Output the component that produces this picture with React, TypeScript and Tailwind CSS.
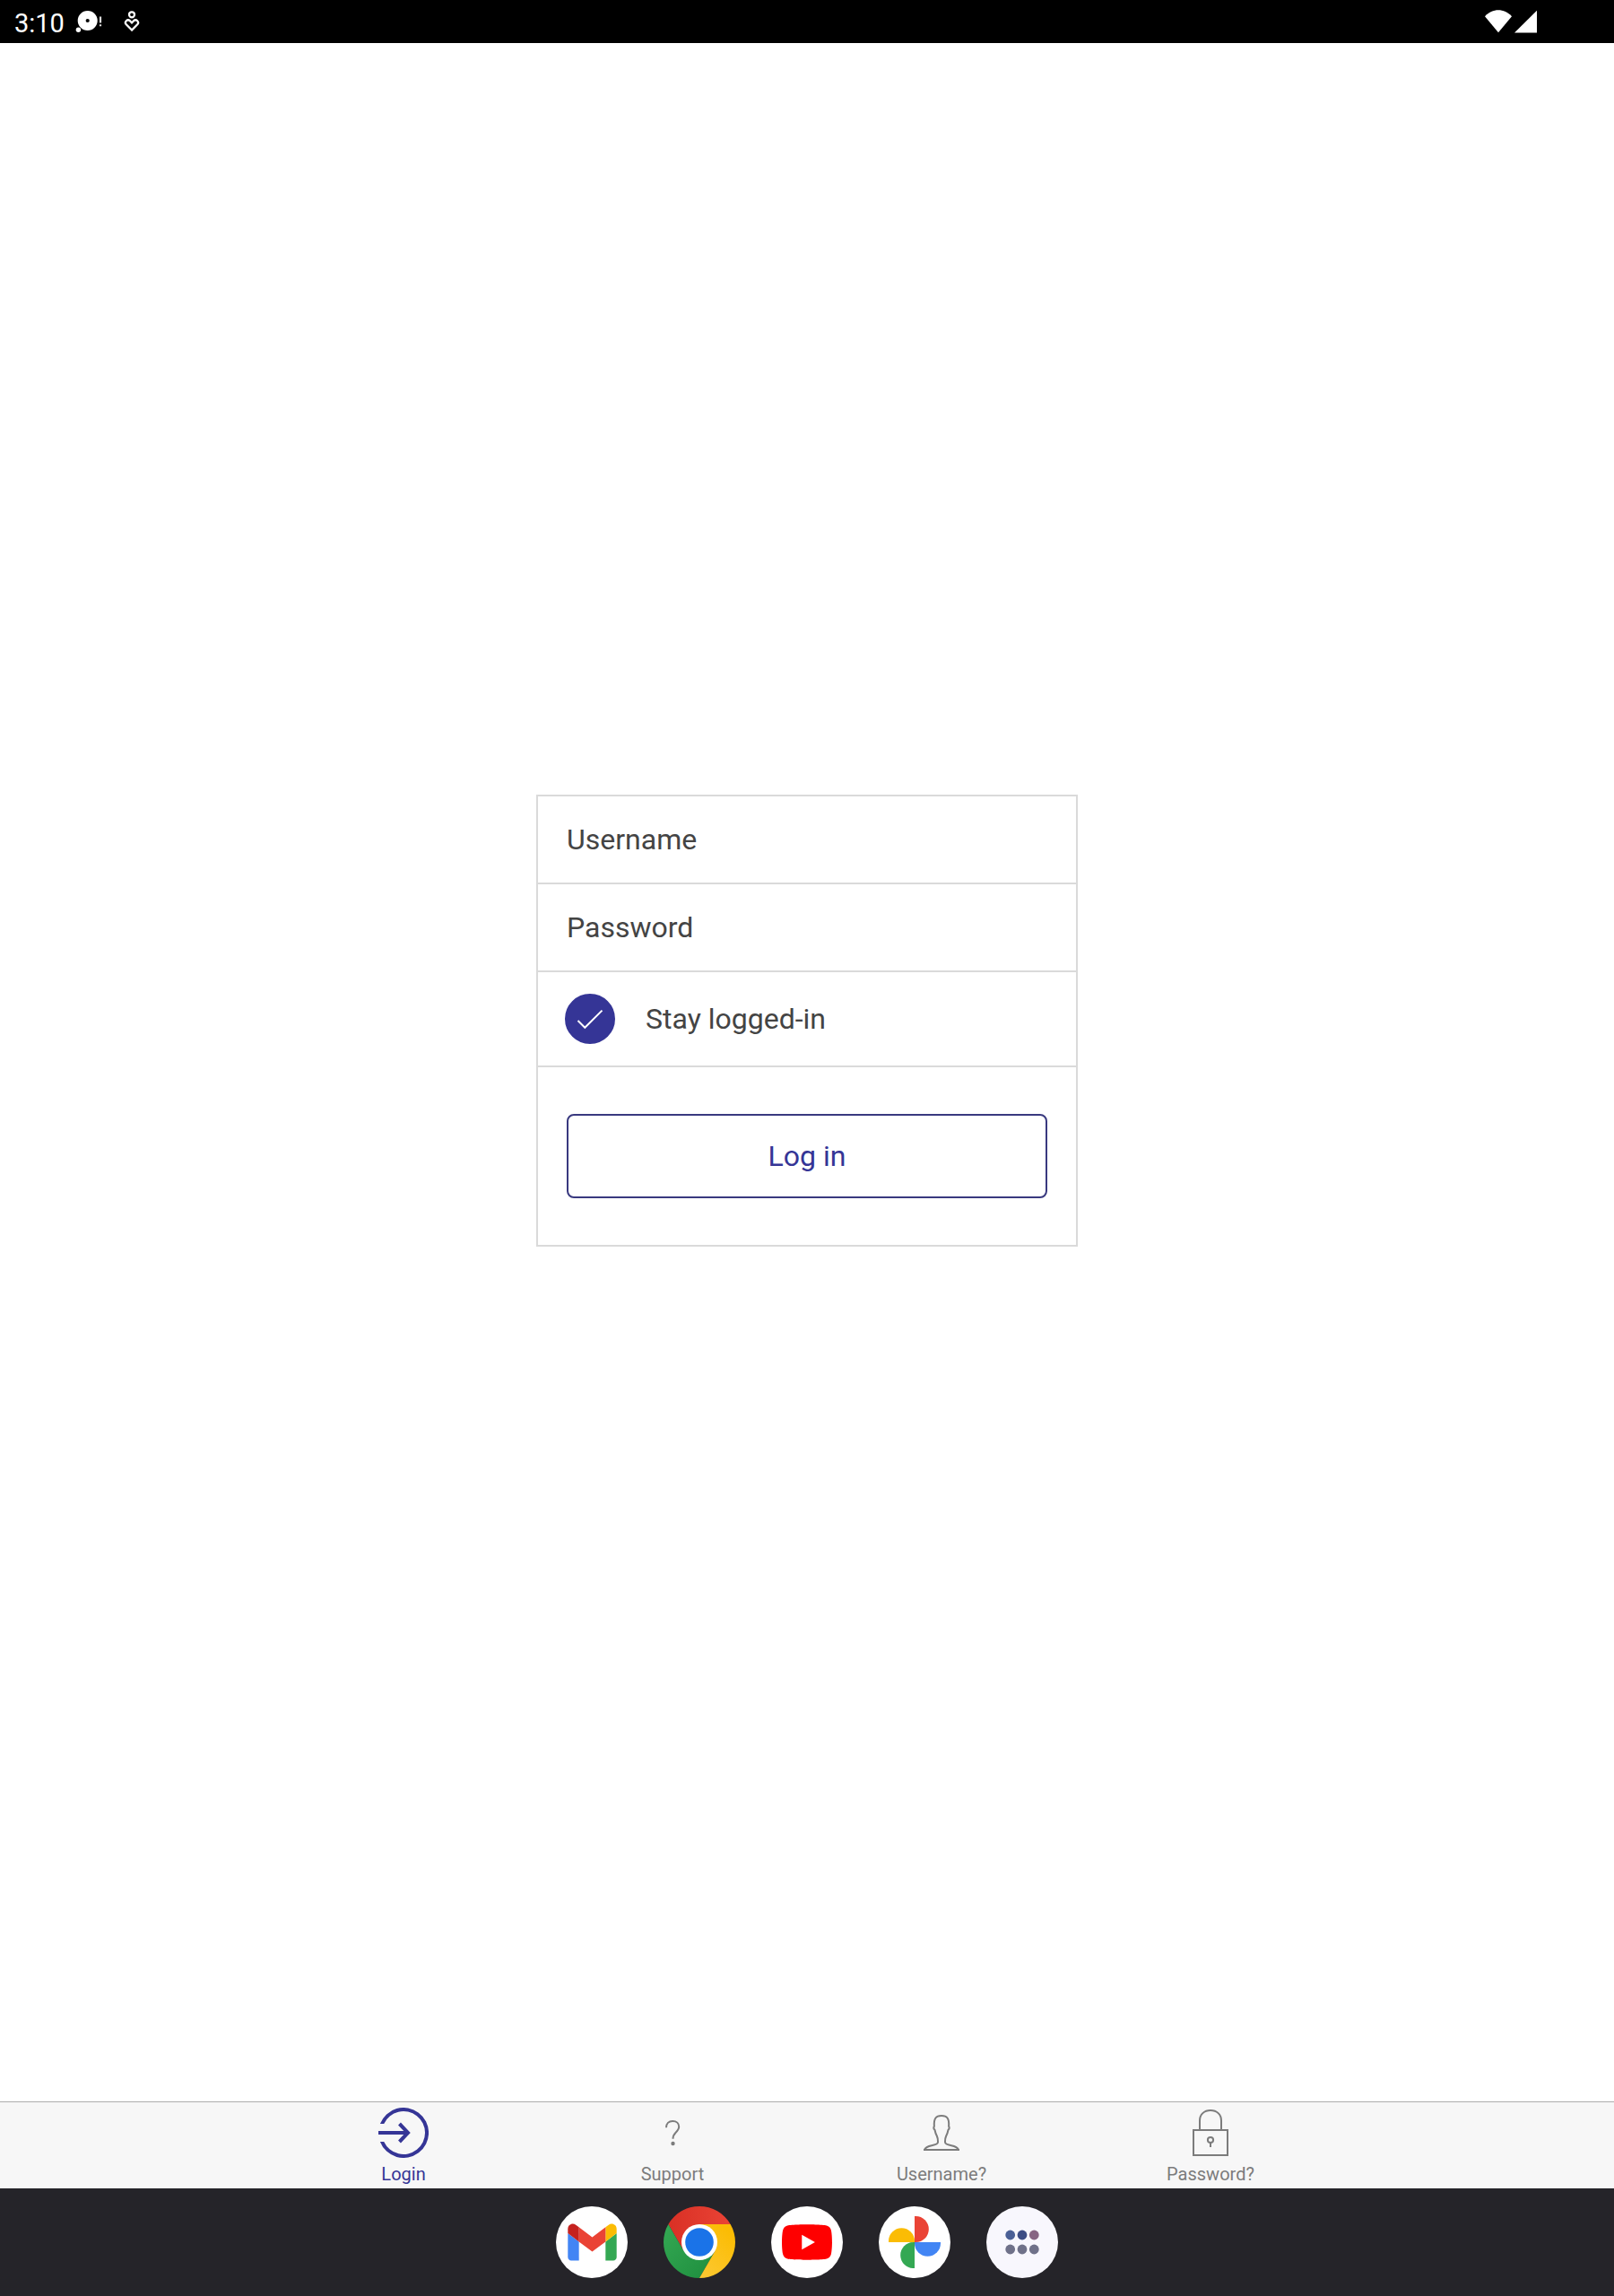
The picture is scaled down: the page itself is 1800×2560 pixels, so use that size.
import React, { useState } from 'react';
import clsx from 'clsx';

type TabId = 'login' | 'support' | 'username' | 'password';

const StatusBar = () => (
  <header className="flex h-12 shrink-0 items-center justify-between bg-black pl-4 pr-[86px] text-white">
    <div className="flex items-center">
      <span className="pt-1 text-[29px] leading-8">3:10</span>
      <svg className="ml-3 h-12 w-[30px]" viewBox="84 0 30 48" fill="currentColor" aria-hidden="true">
        <path fillRule="evenodd" d="M97.7 12a11 11 0 1 1 0 22a11 11 0 1 1 0-22zM97.7 20.9a2.1 2.1 0 1 0 0 4.2a2.1 2.1 0 1 0 0-4.2z" />
        <circle cx="87.4" cy="33.3" r="2.7" />
        <path d="M110.9 18.5h2.2v7h-2.2zM110.9 27.3h2.2v2h-2.2z" opacity="0.85" />
      </svg>
      <svg className="ml-6 h-12 w-[18px]" viewBox="138 0 18 48" fill="none" stroke="currentColor" strokeWidth="2.3" aria-hidden="true">
        <circle cx="147" cy="16.3" r="3" />
        <path d="M147 33.5l-6.2-6.2a2.9 2.9 0 0 1 4.1-4.1l2.1 2.2l2.1-2.2a2.9 2.9 0 0 1 4.1 4.1z" />
      </svg>
    </div>
    <div className="flex items-center gap-[3px]">
      <svg className="h-12 w-[30px]" viewBox="0 0 30 48" fill="currentColor" aria-hidden="true">
        <path d="M15 36.3L0 18.3C8.5 9 21.5 9 30 18.3z" />
      </svg>
      <svg className="h-12 w-[25px]" viewBox="0 0 25 48" fill="currentColor" aria-hidden="true">
        <path d="M0 36.6L25 11.7V36.6z" />
      </svg>
    </div>
  </header>
);

const LoginIcon = () => (
  <svg className="size-14" viewBox="0 0 56 56" aria-hidden="true">
    <path fill="currentColor" d="M1.9 18A28 28 0 1 1 1.9 38H6.2A24 24 0 1 0 6.2 18z" />
    <path fill="none" stroke="currentColor" strokeWidth="4" d="M0 28H32M23.5 18L33 28L23.5 38" />
  </svg>
);

const HelpIcon = () => (
  <svg className="size-14" viewBox="0 0 56 56" aria-hidden="true">
    <path
      fill="none"
      stroke="currentColor"
      strokeWidth="2"
      d="M21 22.2C21 17.8 23.8 15 28.2 15C32.4 15 35.2 17.7 35.2 21.3C35.2 24.3 33.6 25.9 31.4 28C29.2 30.2 28.5 31.5 28.5 34.8"
    />
    <circle cx="28.5" cy="40" r="2.2" fill="currentColor" />
  </svg>
);

const PersonIcon = () => (
  <svg className="size-14" viewBox="0 0 56 56" aria-hidden="true">
    <path
      fill="none"
      stroke="currentColor"
      strokeWidth="2"
      strokeLinejoin="round"
      d="M9 47C10.3 43.8 13.5 42.9 17 42.2C21 41.4 24 40.6 24 38.5C24 36 24.2 34.5 22.8 31.5C21.5 29 20.9 27 20.5 24.8C19.3 24 19.2 22 19.9 20.5C19.3 12.5 21.5 9 28 9C34.5 9 36.7 12.5 36.1 20.5C36.8 22 36.7 24 35.5 24.8C35.1 27 34.5 29 33.2 31.5C31.8 34.5 32 36 32 38.5C32 40.6 35 41.4 39 42.2C42.5 42.9 45.7 43.8 47 47z"
    />
    <path fill="currentColor" d="M8 46H48V48H8z" />
  </svg>
);

const LockIcon = () => (
  <svg className="size-14" viewBox="0 0 56 56" fill="none" stroke="currentColor" strokeWidth="2" aria-hidden="true">
    <path d="M9 25H47V53H9z" />
    <path d="M16 25V14.5C16 7.5 21 3 28 3S40 7.500 40 14.500V25" />
    <circle cx="28" cy="36" r="3.1" />
    <path d="M28 39V44" />
  </svg>
);

const tabs: { id: TabId; label: string; icon: React.ReactNode }[] = [
  { id: 'login', label: 'Login', icon: <LoginIcon /> },
  { id: 'support', label: 'Support', icon: <HelpIcon /> },
  { id: 'username', label: 'Username?', icon: <PersonIcon /> },
  { id: 'password', label: 'Password?', icon: <LockIcon /> },
];

const GmailIcon = () => (
  <svg className="size-20" viewBox="0 0 80 80" aria-hidden="true">
    <circle cx="40" cy="40" r="40" fill="#fff" />
    <g transform="translate(13.3 19.6) scale(0.618) translate(-52 -42)">
      <path fill="#4285f4" d="M58 108h14V74L52 59v43c0 3.32 2.69 6 6 6" />
      <path fill="#34a853" d="M120 108h14c3.32 0 6-2.69 6-6V59l-20 15" />
      <path fill="#fbbc04" d="M120 48v26l20-15v-8c0-7.42-8.47-11.65-14.4-7.2" />
      <path fill="#ea4335" d="M72 74V48l24 18 24-18v26L96 92" />
      <path fill="#c5221f" d="M52 51v8l20 15V48l-5.6-4.2c-5.94-4.45-14.4-.22-14.4 7.2" />
    </g>
  </svg>
);

const ChromeIcon = () => (
  <svg className="size-20" viewBox="0 0 80 80" aria-hidden="true">
    <defs>
      <linearGradient id="chromeRed" x1="0" y1="0" x2="1" y2="0">
        <stop offset="0" stopColor="#d93025" />
        <stop offset="1" stopColor="#ea4335" />
      </linearGradient>
      <linearGradient id="chromeGreen" x1="1" y1="1" x2="0" y2="0">
        <stop offset="0" stopColor="#1e8e3e" />
        <stop offset="1" stopColor="#34a853" />
      </linearGradient>
      <linearGradient id="chromeYellow" x1="0" y1="1" x2="0.6" y2="0">
        <stop offset="0" stopColor="#fcc934" />
        <stop offset="1" stopColor="#fbbc04" />
      </linearGradient>
    </defs>
    <path fill="url(#chromeRed)" d="M5.36 20A40 40 0 0 1 74.64 20H40L22.7 50z" />
    <path fill="url(#chromeGreen)" d="M5.36 20L22.7 50H57.3L40 80A40 40 0 0 1 5.36 20z" />
    <path fill="url(#chromeYellow)" d="M40 20H74.64A40 40 0 0 1 40 80L57.3 50z" />
    <circle cx="40" cy="40" r="20" fill="#fff" />
    <circle cx="40" cy="40" r="15.8" fill="#1a73e8" />
  </svg>
);

const YoutubeIcon = () => (
  <svg className="size-20" viewBox="0 0 80 80" aria-hidden="true">
    <circle cx="40" cy="40" r="40" fill="#fff" />
    <path
      fill="#f00"
      transform="translate(12 12) scale(2.333)"
      d="M23.498 6.186a3.016 3.016 0 0 0-2.122-2.136C19.505 3.545 12 3.545 12 3.545s-7.505 0-9.377.505A3.017 3.017 0 0 0 .502 6.186C0 8.07 0 12 0 12s0 3.93.502 5.814a3.016 3.016 0 0 0 2.122 2.136c1.871.505 9.376.505 9.376.505s7.505 0 9.377-.505a3.015 3.015 0 0 0 2.122-2.136C24 15.93 24 12 24 12s0-3.93-.502-5.814zM9.545 15.568V8.432L15.818 12z"
    />
  </svg>
);

const PhotosIcon = () => (
  <svg className="size-20" viewBox="0 0 80 80" aria-hidden="true">
    <circle cx="40" cy="40" r="40" fill="#fff" />
    <path fill="#ea4335" d="M40 11h1.3a14.5 14.5 0 0 1 0 29H40z" />
    <path fill="#4285f4" transform="rotate(90 40 40)" d="M40 11h1.3a14.5 14.5 0 0 1 0 29H40z" />
    <path fill="#34a853" transform="rotate(180 40 40)" d="M40 11h1.3a14.5 14.5 0 0 1 0 29H40z" />
    <path fill="#fbbc04" transform="rotate(270 40 40)" d="M40 11h1.3a14.5 14.5 0 0 1 0 29H40z" />
  </svg>
);

const AppsIcon = () => (
  <svg className="size-20" viewBox="0 0 80 80" aria-hidden="true">
    <circle cx="40" cy="40" r="40" fill="#f8f7fd" />
    <circle cx="26.7" cy="32" r="5.4" fill="#4a5f96" />
    <circle cx="40" cy="32" r="5.4" fill="#3d4d85" />
    <circle cx="53.3" cy="32" r="5.4" fill="#876583" />
    <circle cx="26.7" cy="48" r="5.4" fill="#6f7189" />
    <circle cx="40" cy="48" r="5.4" fill="#6f7189" />
    <circle cx="53.3" cy="48" r="5.4" fill="#6f7189" />
  </svg>
);

const dockApps = [
  { name: 'Gmail', icon: <GmailIcon /> },
  { name: 'Chrome', icon: <ChromeIcon /> },
  { name: 'YouTube', icon: <YoutubeIcon /> },
  { name: 'Photos', icon: <PhotosIcon /> },
  { name: 'All apps', icon: <AppsIcon /> },
];

const LoginForm = () => {
  const [username, setUsername] = useState('');
  const [password, setPassword] = useState('');
  const [stayLoggedIn, setStayLoggedIn] = useState(true);

  return (
    <form
      onSubmit={(e) => e.preventDefault()}
      className="w-full max-w-[604px] divide-y-2 divide-[#dadada] border-2 border-[#dadada] text-[32px] text-[#444]"
    >
      <div>
        <input
          type="text"
          aria-label="Username"
          placeholder="Username"
          value={username}
          onChange={(e) => setUsername(e.target.value)}
          className="block h-24 w-full px-8 outline-none placeholder:text-[#444]"
        />
      </div>
      <div>
        <input
          type="password"
          aria-label="Password"
          placeholder="Password"
          value={password}
          onChange={(e) => setPassword(e.target.value)}
          className="block h-24 w-full px-8 outline-none placeholder:text-[#444]"
        />
      </div>
      <label className="flex items-center gap-[34px] px-[30px] py-6">
        <span className="relative size-14">
          <input
            type="checkbox"
            checked={stayLoggedIn}
            onChange={(e) => setStayLoggedIn(e.target.checked)}
            className="peer block size-14 appearance-none rounded-full border-2 border-[#353596] checked:bg-[#353596]"
          />
          <svg
            className="pointer-events-none absolute inset-0 hidden size-14 text-white peer-checked:block"
            viewBox="0 0 56 56"
            fill="none"
            stroke="currentColor"
            strokeWidth="2"
            aria-hidden="true"
          >
            <path d="M14.5 30L22.3 37.8L41.5 18.6" />
          </svg>
        </span>
        <span className="leading-10">Stay logged-in</span>
      </label>
      <div className="px-8 py-[52px]">
        <button type="submit" className="block h-[94px] w-full rounded-lg border-2 border-[#39397f] text-[#353596]">
          Log in
        </button>
      </div>
    </form>
  );
};

export default function App() {
  const [activeTab, setActiveTab] = useState<TabId>('login');

  return (
    <div className="flex min-h-screen flex-col bg-white font-[Roboto,sans-serif]">
      <StatusBar />

      <main className="flex grow items-center justify-center pb-[116px]">
        <LoginForm />
      </main>

      {/* Tab bar */}
      <nav className="flex justify-center border-t border-[#adadad] bg-[#f7f7f7]">
        {tabs.map((tab) => (
          <a
            key={tab.id}
            href={`#${tab.id}`}
            aria-current={activeTab === tab.id ? 'page' : undefined}
            onClick={() => setActiveTab(tab.id)}
            className={clsx(
              'flex w-1/6 flex-col items-center gap-1.5 pt-1.5 pb-1 text-xl leading-6',
              activeTab === tab.id ? 'text-[#353596]' : 'text-[#7c7c7c]'
            )}
          >
            {tab.icon}
            <span>{tab.label}</span>
          </a>
        ))}
      </nav>

      {/* Dock */}
      <footer className="flex justify-center gap-10 bg-[#252429] py-5">
        {dockApps.map((app) => (
          <button key={app.name} type="button" aria-label={app.name} className="rounded-full">
            {app.icon}
          </button>
        ))}
      </footer>
    </div>
  );
}
